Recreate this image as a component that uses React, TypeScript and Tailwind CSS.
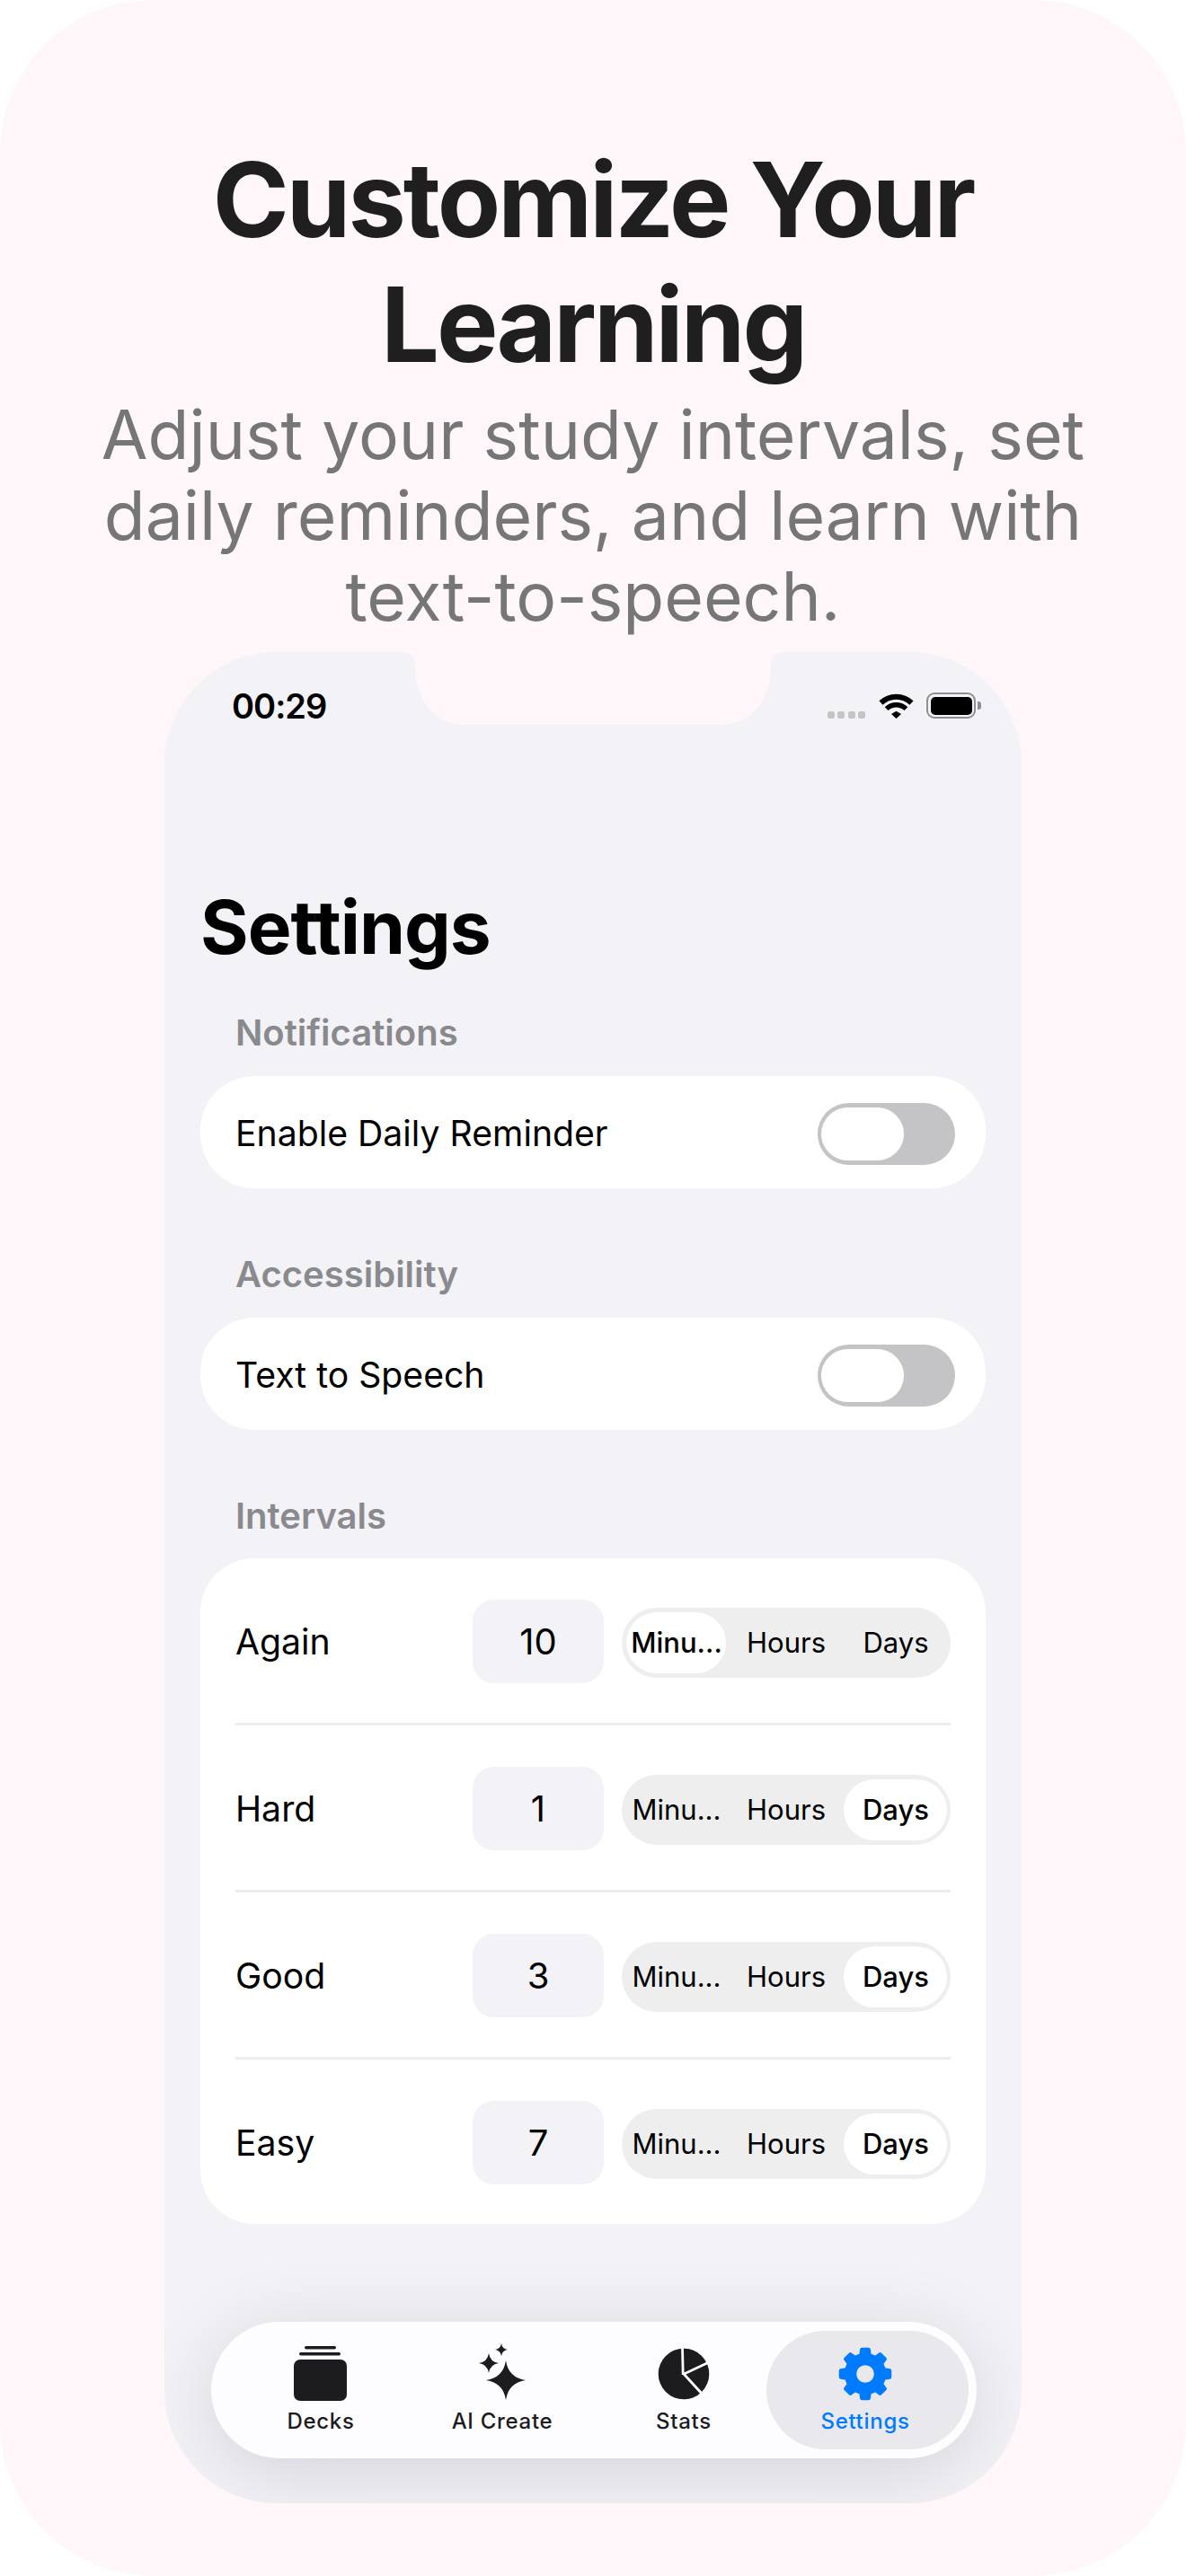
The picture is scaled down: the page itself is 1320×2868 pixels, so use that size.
const star = (cx: number, cy: number, r: number) => {
  const k = r * 0.13;
  return `M${cx} ${cy - r}Q${cx + k} ${cy - k} ${cx + r} ${cy}Q${cx + k} ${cy + k} ${cx} ${cy + r}Q${cx - k} ${cy + k} ${cx - r} ${cy}Q${cx - k} ${cy - k} ${cx} ${cy - r}Z`;
};

const gearPoints = Array.from({ length: 8 }, (_, i) => {
  const a = i * 45 - 90;
  return [
    [a - 13, 21.5],
    [a - 8, 27.5],
    [a + 8, 27.5],
    [a + 13, 21.5],
  ]
    .map(([d, r]) => {
      const t = (d * Math.PI) / 180;
      return `${(35 + r * Math.cos(t)).toFixed(2)},${(31 + r * Math.sin(t)).toFixed(2)}`;
    })
    .join(" ");
}).join(" ");

function DecksIcon() {
  return (
    <svg viewBox="0 0 70 62" className="h-[62px] w-[70px] overflow-visible" fill="#1c1c1e">
      <rect x="17" y="0" width="35" height="3.5" rx="1.75" />
      <rect x="11" y="7" width="46" height="3.5" rx="1.75" />
      <rect x="5" y="15" width="59" height="46" rx="7" />
    </svg>
  );
}

function SparkleIcon() {
  return (
    <svg viewBox="0 0 70 62" className="h-[62px] w-[70px] overflow-visible" fill="#1c1c1e">
      <path d={star(39, 38, 22)} />
      <path d={star(20, 19, 11)} />
      <path d={star(34, 4, 7)} />
    </svg>
  );
}

function PieIcon() {
  return (
    <svg viewBox="0 0 70 62" className="h-[62px] w-[70px] overflow-visible">
      <circle cx="35" cy="31" r="28.3" fill="#1c1c1e" />
      <path d="M34.2 32L33.5 1M34.5 31.5L63 18M35 31L57 55" stroke="#fdfcff" strokeWidth="2.8" fill="none" />
    </svg>
  );
}

function GearIcon() {
  return (
    <svg viewBox="0 0 70 62" className="h-[62px] w-[70px] overflow-visible">
      <polygon points={gearPoints} fill="#007aff" stroke="#007aff" strokeWidth="4" strokeLinejoin="round" />
      <circle cx="35" cy="31" r="9.8" fill="#e9e9ed" />
    </svg>
  );
}

function StatusIcons() {
  return (
    <div className="flex items-start">
      <div className="mt-[20px] flex gap-[3.4px]">
        {[0, 1, 2, 3].map((i) => (
          <div key={i} className="h-[8px] w-[8px] rounded-[2.5px] bg-[#c4c4c6]" />
        ))}
      </div>
      <svg viewBox="0 0 39 29" className="ml-[15px] mt-[-1px] h-[29px] w-[39px] overflow-visible" fill="none" stroke="#000">
        <path d="M2.5 11.5A24.5 24.5 0 0 1 36.5 11.5" strokeWidth="6" />
        <path d="M8.6 18.2A15.5 15.5 0 0 1 30.4 18.2" strokeWidth="5.4" />
        <path d="M14 24L19.5 20.7L25 24L19.5 29Z" fill="#000" stroke="none" />
      </svg>
      <div className="ml-[14px] mt-[-1px] flex items-center">
        <div className="flex h-[29px] w-[55px] items-center justify-center rounded-[9px] border-[2.5px] border-[#8e8e93]">
          <div className="h-[20px] w-[46px] rounded-[5px] bg-black" />
        </div>
        <div className="ml-[2px] h-[9px] w-[4px] rounded-r-[3px] bg-[#8e8e93]" />
      </div>
    </div>
  );
}

function Toggle() {
  return (
    <div className="flex h-[69px] w-[153px] items-center rounded-full bg-[#c4c4c6] pl-[4px]">
      <div className="h-[59px] w-[92px] rounded-full bg-white" />
    </div>
  );
}

function SectionLabel({ children, className }: { children: string; className: string }) {
  return <p className={`pl-[39px] text-[40px] leading-[48px] font-semibold text-[#8a8a8e] ${className}`}>{children}</p>;
}

function ToggleCard({ label, className }: { label: string; className: string }) {
  return (
    <div className={`flex h-[125px] items-center justify-between rounded-[60px] bg-white pl-[39px] pr-[34px] pt-[3px] ${className}`}>
      <span className="text-[39.2px] leading-[48px] text-black">{label}</span>
      <Toggle />
    </div>
  );
}

function Segmented({ active }: { active: number }) {
  const units = ["Minu...", "Hours", "Days"];
  return (
    <div className="flex h-[78px] w-[366px] items-center rounded-full bg-[#eeeeef]">
      {units.map((unit, i) => (
        <div key={unit} className="relative flex h-full w-[122px] items-center justify-center">
          {i === active && (
            <div
              className={
                i === 0
                  ? "absolute bottom-[5px] left-[5px] right-[6px] top-[5px] rounded-full bg-white"
                  : "absolute bottom-[5px] left-[3px] right-[4px] top-[5px] rounded-full bg-white"
              }
            />
          )}
          <span className={`relative text-[31px] leading-[40px] text-black ${i === active ? "font-medium" : ""}`}>
            {unit}
          </span>
        </div>
      ))}
    </div>
  );
}

function IntervalRow({ label, value, active, last }: { label: string; value: string; active: number; last?: boolean }) {
  return (
    <div
      className={
        last
          ? "flex h-[183px] items-center pt-[2px]"
          : "flex h-[186px] items-center border-b-[3px] border-[#ededed] pt-[2px]"
      }
    >
      <span className="w-[264px] text-[39.2px] leading-[48px] text-black">{label}</span>
      <div className="flex h-[93px] w-[146px] items-center justify-center rounded-[24px] bg-[#f2f2f7] text-[40px] text-black">
        {value}
      </div>
      <div className="ml-[20px] mt-[2px]">
        <Segmented active={active} />
      </div>
    </div>
  );
}

function TabItem({ icon, label, active }: { icon: React.ReactNode; label: string; active?: boolean }) {
  return (
    <div
      className={
        active
          ? "ml-[-9px] flex h-[132px] w-[225px] flex-col items-center justify-center rounded-full bg-[#e9e9ed] pr-[5px]"
          : "flex w-[202px] flex-col items-center justify-center"
      }
    >
      {icon}
      <span className={`mt-[7px] text-[24px] leading-[30px] font-medium tracking-[0.7px] ${active ? "text-[#007aff]" : "text-[#1c1c1e]"}`}>
        {label}
      </span>
    </div>
  );
}

export default function App() {
  return (
    <div className="h-[2868px] w-[1320px] bg-white [font-family:Inter,sans-serif]">
      <div className="h-full overflow-hidden rounded-[170px] bg-[#fff6fa] pt-[153px]">
        <h1 className="text-center text-[115px] leading-[139px] font-bold tracking-[-3px] text-[#1f1f1f]">
          Customize Your
          <br />
          Learning
        </h1>
        <p className="mt-[8px] text-center text-[75px] leading-[90px] text-[#767676]">
          Adjust your study intervals, set
          <br />
          daily reminders, and learn with
          <br />
          text-to-speech.
        </p>

        <div className="relative mx-auto mt-[17px] h-[2061px] w-[954px] overflow-hidden rounded-[125px] bg-[#f2f2f7]">
          {/* notch */}
          <svg viewBox="0 0 426 81" className="absolute left-[264px] top-0 h-[81px] w-[426px]" fill="#fff6fa">
            <path d="M0 0H426C418 0 411 4 411 14C411 52 392 81 353 81H73C34 81 15 52 15 14C15 4 8 0 0 0Z" />
          </svg>

          <div className="flex h-[120px] items-center justify-between pl-[75px] pr-[45px]">
            <span className="text-[38px] leading-[46px] font-semibold tracking-[-1px] text-black">00:29</span>
            <StatusIcons />
          </div>

          <div className="px-[40px]">
            <h2 className="mt-[139px] text-[82px] leading-[96px] font-bold tracking-[-1px] text-black">Settings</h2>

            <SectionLabel className="mt-[45px]">Notifications</SectionLabel>
            <ToggleCard label="Enable Daily Reminder" className="mt-[24px]" />

            <SectionLabel className="mt-[72px]">Accessibility</SectionLabel>
            <ToggleCard label="Text to Speech" className="mt-[24px]" />

            <SectionLabel className="mt-[72px]">Intervals</SectionLabel>
            <div className="mt-[23px] rounded-[60px] bg-white px-[39px]">
              <IntervalRow label="Again" value="10" active={0} />
              <IntervalRow label="Hard" value="1" active={2} />
              <IntervalRow label="Good" value="3" active={2} />
              <IntervalRow label="Easy" value="7" active={2} last />
            </div>
          </div>

          <div className="absolute bottom-[50px] left-[52px] flex h-[152px] w-[852px] items-center rounded-full bg-[#fdfcff] pl-[21px] shadow-[0_16px_90px_rgba(0,0,0,0.13)]">
            <TabItem icon={<DecksIcon />} label="Decks" />
            <TabItem icon={<SparkleIcon />} label="AI Create" />
            <TabItem icon={<PieIcon />} label="Stats" />
            <TabItem icon={<GearIcon />} label="Settings" active />
          </div>
        </div>
      </div>
    </div>
  );
}
